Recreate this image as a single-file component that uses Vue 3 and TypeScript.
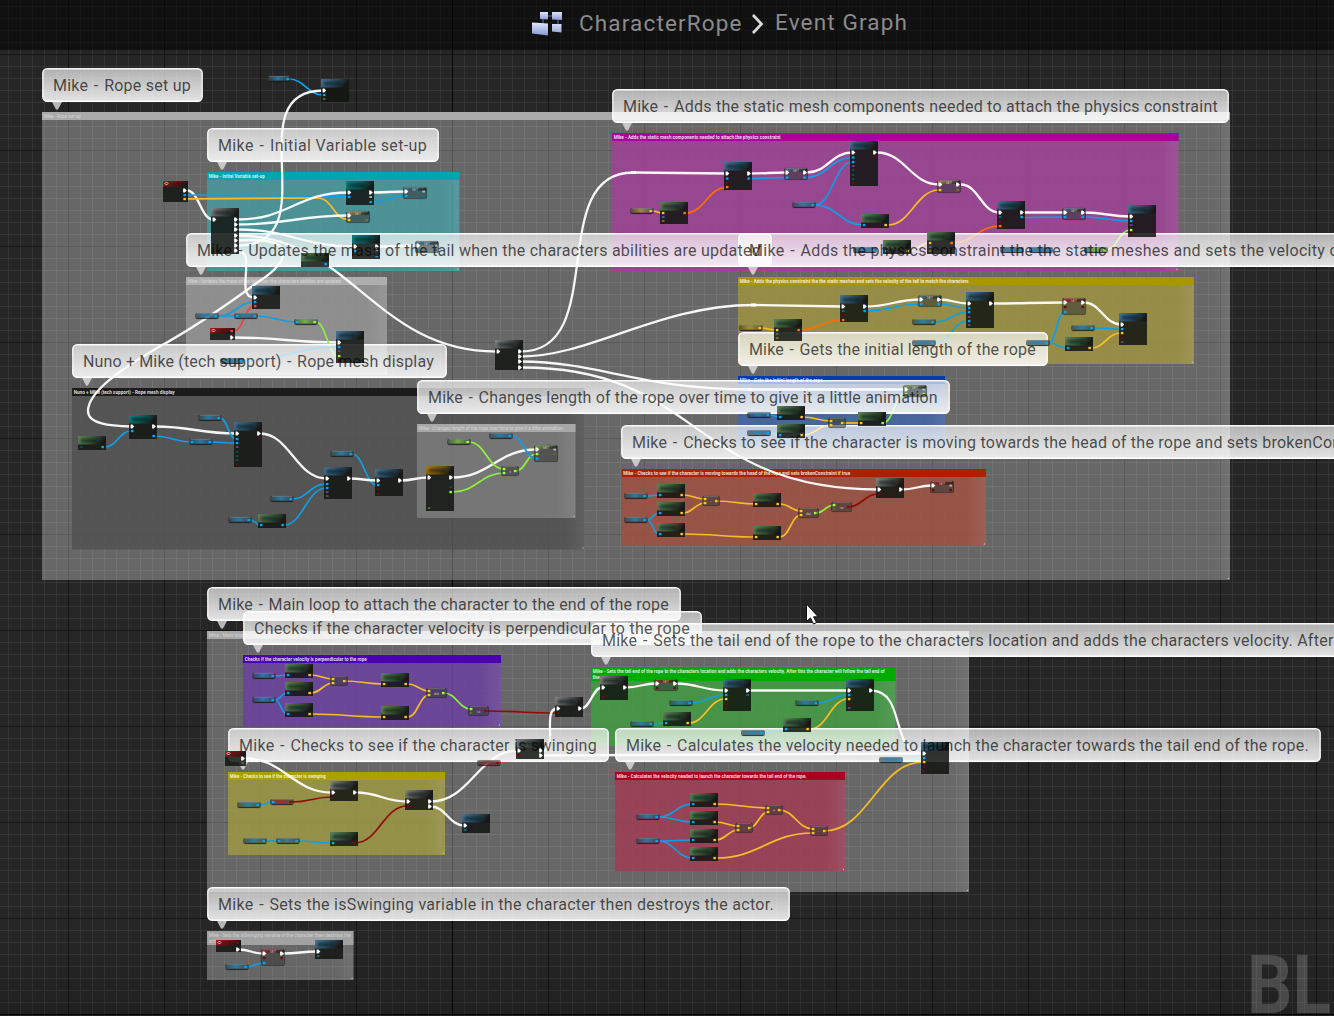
<script setup lang="ts">
type Pin = { x: number; y: number; c: string; exec: boolean; hollow: boolean }
type GraphNode = { kind: string; tone: string; x: number; y: number; w: number; h: number; pins: Pin[]; label: string }
type Comment = { x: number; y: number; r: number; b: number; head: string; body: string; title: string[]; len: number; hh: number; dim?: boolean }
type Bubble = { x: number; y: number; w: number; text: string; len?: number; gap?: string }

const pinColors: Record<string, string> = {
  e: '#ffffff', w: '#b5c5c5', b: '#00a8f6', B: '#087098', y: '#ffc61a', Y: '#8d7420', r: '#6d0b0b', R: '#ff3a3a',
  o: '#ff7300', l: '#9aff3e', g: '#4b7c24', p: '#684a87', t: '#07574f', v: '#5a6694', D: '#a00000',
}

function parsePins(list: string, x: number, y: number): Pin[] {
  return list.split(' ').filter(Boolean).map((p) => {
    const c = p.slice(-1)
    return { x, y: y + parseFloat(p), c: pinColors[c], exec: c === 'e', hollow: 'wBYgptv'.includes(c) }
  })
}

function block(tone: string, x: number, y: number, h: number, left: string, right = '', w = 28): GraphNode {
  return { kind: 'block', tone, x, y, w, h, label: '', pins: [...parsePins(left, x + 3, y), ...parsePins(right, x + w - 3.5, y)] }
}
function pill(x: number, y: number, tone = 'blue', right = 'b', left = ''): GraphNode {
  return {
    kind: 'pill', tone, x, y, w: 24, h: 6, label: '',
    pins: [...parsePins(left ? '3' + left : '', x + 3, y), ...parsePins('3' + right, x + 20.5, y)],
  }
}
function setter(tone: string, x: number, y: number, h: number, left: string, right: string): GraphNode {
  return { kind: 'set', tone, x, y, w: 24, h, label: 'SET', pins: [...parsePins(left, x + 3, y), ...parsePins(right, x + 20.5, y)] }
}
function op(x: number, y: number, label: string, left = '3y 7y', right = '5y', w = 18): GraphNode {
  return { kind: 'op', tone: 'op', x, y, w, h: 10, label, pins: [...parsePins(left, x + 3, y), ...parsePins(right, x + w - 4, y)] }
}
const pure = (x: number, y: number, l = 'b', r = 'y') => block('green', x, y, 14, '11' + l, '11' + r)
const make = (x: number, y: number) => block('green', x, y, 22, '11y 15v 19Y', '11o')

const nodes: GraphNode[] = [
  // rope set up
  pill(267, 76), block('blue', 321, 79, 23, '11.5e 16b 20g'),
  block('red', 163, 181, 21, '', '9.5e 14b 18y', 25),
  block('grey', 211, 208, 46, '11.5e', '11.5e 16.5e 21.5e 27.5e 32.5e 37.5e 42.5e'),
  block('teal', 346, 181, 24, '11.5e 16b', '11.5e 16w 21b'),
  setter('blue', 403, 187, 12, '4.5e 9b', '4.5w 9B'),
  setter('yellow', 346, 211, 12, '4.5e 9y', '9Y'),
  block('teal', 352, 235, 24, '11.5e 16b', '11.5e 16w 21b'),
  setter('blue', 415, 241, 12, '4.5e 9b', '4.5w 9B'),
  pure(301, 253, 't', 'b'),
  block('grey', 495, 340, 30, '11.5e', '11.5e 16.5e 21.5e 27.5e'),
  // static mesh components
  block('blue', 724, 162, 28, '11.5e 16.5b 21r 25o', '11.5e 16.5b'),
  pill(630, 208, 'yellow', 'y'), make(660, 202),
  setter('blue', 784, 168, 12, '4.5e 9.5b', '4.5e 9.5b'),
  block('blue', 850, 141, 45, '11.5e 16.5b 21b 25p 29t 34t 38t 42r', '11.5e 16r'),
  setter('yellow', 937, 180, 13, '4.5e 10y', '4.5e 10Y'),
  pill(792, 202), pure(861, 214), pill(853, 247), pure(883, 240), make(927, 232),
  block('blue', 997, 201, 28, '11.5e 16B 21r 25o', '11.5e 16b'),
  setter('blue', 1062, 208, 12, '4.5e 9b', '4.5e 9b'),
  block('blue', 1128, 205, 32, '11.5e 16b 20p 25l 29r'),
  pill(1000, 247), pill(1029, 247, 'blue', 'b', 'b'), pill(1084, 247, 'lime', 'l', 'b'),
  // physics constraint
  pill(739, 325, 'yellow', 'y'), make(774, 319),
  block('blue', 840, 295, 27, '11.5e 16B 20r 25o', '11.5e 16b'),
  setter('blue', 918, 295, 12, '4.5e 9b', '4.5e 9b'),
  block('blue', 966, 292, 36, '11.5e 16b 20b 25p 29b 33p', '11.5e'),
  pill(912, 319), pill(912, 340),
  setter('red', 1062, 298, 17, '4.5e 9r 14b', '4.5e 9r'),
  block('blue', 1119, 313, 32, '11.5e 16b 20y 25r 29p'),
  pill(1071, 325), pill(1026, 340), pure(1065, 337),
  // tail mass
  block('blue', 252, 286, 23, '11.5e 16b 20R'), pill(195, 313), pill(234, 313, 'blue', 'b', 'b'),
  pill(294, 319, 'lime', 'l', 'b'), block('red', 210, 328, 12, '', '3R 9.5e', 25),
  block('blue', 336, 331, 32, '11.5e 16b 20p 25l 29r'), pill(220, 358),
  // rope mesh display
  pure(78, 436, 't', 'b'), block('teal', 129, 415, 24, '11.5e 16b', '11.5e 21b'),
  pill(198, 415), pill(189, 439, 'blue', 'b', 'b'),
  block('blue', 234, 422, 45, '11.5e 17b 21b 25p 30t 34t 38t 42r', '11.5e 16r'),
  pill(330, 451), block('blue', 324, 467, 32, '11.5e 17b 21b 25p 29p', '11.5e'),
  block('blue', 375, 469, 27, '11.5e 16b 20r 25r', '11.5e'),
  pill(270, 496), pill(228, 517), pure(258, 514, 'b', 'b'),
  // rope length animation
  block('gold', 426, 466, 45, '11.5e 42g', '11.5e 21t 26l'), pill(447, 439, 'lime', 'l'), pill(489, 433),
  setter('lime', 534, 445, 17, '4.5e 9l 13.5b', '4.5w 9g'), op(501, 466, 'x', '3l 7l', '5l'),
  // initial length
  setter('lime', 903, 385, 12, '4.5e 9l', '4.5w 9l'), pill(747, 412), pill(747, 430),
  pure(777, 406), pure(777, 424), op(828, 418, '-'), pure(858, 412, 'y', 'l'),
  // broken constraint
  pill(624, 493), pill(624, 517), pure(657, 484), pure(657, 502), pure(657, 523), op(702, 496, '-'),
  pure(753, 493, 'y'), pure(753, 526, 'y'), op(798, 508, 'dot', '3y 7y', '5l', 21), op(831, 502, '<=', '3l 7g', '5D', 21),
  block('grey', 876, 478, 20, '11.5e 16r', '11.5e'), setter('red', 930, 481, 12, '4.5e 9r', '4.5w 9r'),
  // perpendicular check
  pill(252, 673), pill(252, 697), pure(285, 664), pure(285, 682), pure(285, 703), op(330, 676, '-'),
  pure(381, 673, 'y'), pure(381, 706, 'y'), op(426, 688, 'dot', '3y 7y', '5l', 21), op(468, 706, '<=', '3l 7g', '5D', 21),
  block('grey', 555, 697, 20, '11.5e 16r', '11.5e'),
  // tail end location
  block('grey', 600, 676, 24, '11.5e 21r', '11.5e'), setter('red', 654, 679, 12, '4.5e 9r', '4.5e 9r'),
  block('blue', 723, 679, 32, '11.5e 16b 20y 25r 29r', '11.5e 16B'), pill(669, 700), pill(630, 721), pure(663, 712),
  pill(741, 730), block('blue', 846, 679, 32, '11.5e 16b 20y 25r 29p', '11.5e'), pill(795, 700), pure(783, 718),
  block('blue', 921, 742, 32, '11.5e 16b 20y 25r 29r'), pill(879, 757),
  // swinging check
  block('red', 225, 751, 15, '', '7.5e 12g', 21), block('grey', 330, 781, 20, '11.5e 16r', '11.5e'),
  block('grey', 405, 790, 20, '11.5e 16r', '11.5e 16.5e'), pill(237, 802), pill(270, 799, 'red', 'D', 'b'),
  pill(243, 838), pill(276, 838, 'blue', 'b', 'b'), pure(330, 832, 'b', 'D'), block('blue', 462, 814, 19, '11.5e 16B'),
  block('grey', 516, 739, 20, '11.5e 16r', '11.5e 16.5e'), pill(477, 760, 'red', 'D'),
  // launch velocity
  pill(636, 814), pill(636, 838), pure(690, 793), pure(690, 811), pure(690, 829), pure(690, 847),
  op(735, 823, '-'), op(765, 805, '+'), op(810, 826, '-'),
  // destroy actor
  block('red', 216, 940, 12, '', '3r 9.5e', 25), setter('red', 261, 949, 17, '4.5e 9r 14b', '4.5e 9r'),
  block('blue', 315, 940, 19, '11.5e 16B'), pill(225, 964),
]

const E = '#ffffff', BL = '#0f9fe6', YE = '#f8bd24', LI = '#8df23c', OR = '#f97000', DR = '#930b08', RE = '#f04040'

/** Horizontal-tangent spline between two pins. */
function s(c: string, x1: number, y1: number, x2: number, y2: number) {
  const d = Math.max(6, Math.abs(x2 - x1) * 0.45)
  return { c, d: `M${x1},${y1} C${x1 + d},${y1} ${x2 - d},${y2} ${x2},${y2}` }
}

const wires = [
  s(BL, 289, 79, 323, 95), s(E, 187, 190.5, 213, 219.5), s(BL, 187, 195, 348, 196.5),
  { c: YE, d: 'M187,198.8 L318,198 C332,198 334,219.5 348,219.5' },
  s(E, 238, 219.5, 348, 192.5), s(E, 238, 224.5, 348, 215.5), s(E, 238, 229.5, 354, 246.5),
  s(E, 373, 192.5, 405, 191.5), s(BL, 371, 202, 405, 196), s(E, 379, 246.5, 417, 245.5), s(BL, 377, 256, 417, 250),
  s(BL, 328, 264, 354, 251),
  { c: E, d: 'M238,245.5 C330,245 235,91 323,90.5' },
  { c: E, d: 'M238,240.5 C300,236 290,262 258,282 C220,310 190,330 157,348 C120,370 88,392 88,411 C88,424 110,426 131,426.5' },
  { c: E, d: 'M237,250.5 C258,250.5 234,297.5 254,297.5' },
  { c: E, d: 'M238,235.5 C350,235.5 375,351.5 496,351.5' },
  { c: E, d: 'M521,351.5 C610,351.5 545,172.5 633,172.5 L726,173.5' },
  { c: E, d: 'M521,356.5 C590,356.5 660,305 753,305 L842,306.5' },
  { c: E, d: 'M521,361.5 C600,362 640,389 750,389.5 L905,389.5' },
  { c: E, d: 'M521,367.5 C700,367 690,489 878,489.5' },
  // static mesh components
  s(E, 750, 173.5, 786, 172.5), s(BL, 750, 178.5, 786, 177.5), s(YE, 652, 211, 663, 213), s(OR, 686, 213, 726, 187.5),
  s(E, 807, 172.5, 852, 152.5), s(BL, 806, 177.5, 852, 157.5), s(BL, 815, 205, 852, 162), s(BL, 815, 205, 863, 225),
  s(E, 877, 152.5, 939, 184.5), s(YE, 888, 225, 939, 190), s(E, 961, 184.5, 999, 212.5), s(OR, 953, 243, 999, 226),
  s(BL, 876, 250, 885, 251), s(YE, 909, 251, 929, 243), s(E, 1024, 212.5, 1064, 212.5), s(BL, 1023, 217.5, 1064, 217),
  s(E, 1085, 212.5, 1130, 216.5), s(BL, 1084, 217, 1130, 221), s(LI, 1106, 250, 1130, 230), s(BL, 1022, 250, 1031, 250),
  s(BL, 1052, 250, 1087, 250),
  // physics constraint
  s(YE, 761, 328, 776, 330), s(OR, 800, 330, 842, 320), s(E, 866, 306.5, 920, 299.5), s(BL, 865, 311, 920, 304),
  s(E, 940, 299.5, 968, 303.5), s(BL, 940, 304, 968, 308), s(BL, 935, 322, 968, 312), s(BL, 935, 343, 968, 321),
  s(E, 992, 303.5, 1064, 302.5), s(E, 1084, 302.5, 1121, 324.5), s(BL, 1094, 328, 1121, 329), s(BL, 1049, 343, 1064, 312),
  s(BL, 1049, 343, 1067, 348), s(YE, 1091, 348, 1121, 333),
  // tail mass
  s(BL, 219, 316, 254, 302), s(BL, 219, 316, 237, 316), s(BL, 256, 316, 297, 322), s(RE, 234, 331, 254, 306),
  s(E, 234, 337.5, 338, 342.5), s(LI, 316, 322, 338, 356), s(BL, 241, 361, 338, 347),
  // rope mesh display
  s(BL, 105, 447, 131, 431), s(E, 155, 426.5, 236, 433.5), s(BL, 154, 436, 192, 442), s(BL, 220, 418, 236, 439),
  s(BL, 210, 442, 236, 443), s(E, 260, 433.5, 326, 478.5), s(BL, 352, 454, 377, 485), s(E, 350, 478.5, 377, 480.5),
  s(BL, 292, 499, 326, 484), s(BL, 250, 520, 261, 525), s(BL, 284, 525, 326, 488), s(E, 401, 480.5, 428, 477.5),
  // rope length animation
  s(E, 452, 477.5, 536, 449.5), s(LI, 453, 492, 504, 473), s(LI, 469, 442, 504, 469), s(LI, 516, 471, 536, 454), s(BL, 512, 436, 536, 458.5),
  // initial length
  s(BL, 769, 415, 780, 417), s(BL, 769, 433, 780, 435), s(YE, 803, 417, 831, 421), s(YE, 803, 435, 831, 425),
  s(YE, 842, 423, 860, 423), s(LI, 883, 423, 905, 394),
  // broken constraint
  s(BL, 647, 496, 659, 495), s(BL, 647, 520, 659, 513), s(BL, 647, 520, 659, 534), s(YE, 683, 495, 705, 499),
  s(YE, 683, 513, 705, 503), s(YE, 716, 501, 756, 504), s(YE, 683, 534, 756, 537), s(YE, 780, 504, 801, 511),
  s(YE, 780, 537, 801, 515), s(LI, 816, 513, 834, 505), s(DR, 848, 507, 878, 494), s(E, 902, 489.5, 932, 485.5),
  // perpendicular check
  s(BL, 275, 676, 287, 675), s(BL, 275, 700, 287, 693), s(BL, 275, 700, 287, 714), s(YE, 311, 675, 333, 679),
  s(YE, 311, 693, 333, 683), s(YE, 344, 681, 384, 684), s(YE, 311, 714, 384, 717), s(YE, 408, 684, 429, 691),
  s(YE, 408, 717, 429, 695), s(LI, 444, 693, 471, 709), s(DR, 485, 711, 558, 713),
  // tail end location
  s(E, 581, 708.5, 602, 687.5), s(E, 626, 687.5, 656, 683.5), s(E, 676, 683.5, 725, 690.5), s(BL, 691, 703, 725, 695),
  s(YE, 689, 723, 725, 699), s(BL, 653, 724, 665, 723), s(E, 749, 690.5, 848, 690.5), s(BL, 817, 703, 848, 695),
  s(YE, 810, 729, 848, 699), s(BL, 764, 733, 785, 729),
  { c: E, d: 'M872,690.5 C906,692 890,753 923,753.5' },
  // swinging check
  s(E, 245, 758.5, 332, 792.5), s(E, 356, 792.5, 407, 801.5), s(E, 431, 801.5, 518, 750.5), s(E, 431, 806.5, 464, 825.5),
  s(BL, 259, 805, 273, 802), s(DR, 292, 802, 332, 797), s(BL, 265, 841, 279, 841), s(BL, 298, 841, 332, 843),
  s(DR, 355, 843, 407, 806), s(RE, 499, 763, 518, 755),
  { c: E, d: 'M543,750.5 C558,750 542,709 557,708.5' },
  s(E, 542, 755.5, 923, 753.5),
  // launch velocity
  s(BL, 659, 817, 692, 804), s(BL, 659, 817, 692, 822), s(BL, 659, 841, 692, 840), s(BL, 659, 841, 692, 858),
  s(YE, 716, 804, 768, 808), s(YE, 716, 822, 738, 826), s(YE, 716, 840, 738, 830), s(YE, 749, 828, 768, 812),
  s(YE, 779, 810, 813, 829), s(YE, 716, 858, 813, 833), s(YE, 824, 831, 923, 762), s(BL, 900, 760, 923, 758),
  // destroy actor
  s(E, 239, 949.5, 263, 953.5), s(E, 283, 953.5, 317, 951.5), s(BL, 247, 967, 263, 963),
]

const comments: Comment[] = [
  { x: 42, y: 112, r: 1230, b: 580, head: '#aaaaaa', body: 'rgba(255,255,255,.3)', title: ['Mike - Rope set up'], len: 37, hh: 8, dim: true },
  { x: 207, y: 631, r: 969, b: 892, head: '#a8a8a8', body: 'rgba(255,255,255,.3)', title: ['Mike - Main loop to attach the character to the end of the rope'], len: 131, hh: 8, dim: true },
  { x: 207, y: 172, r: 459.3, b: 271, head: '#00a5af', body: 'rgba(65,159,164,.75)', title: ['Mike - Initial Variable set-up'], len: 56, hh: 8 },
  { x: 612, y: 133, r: 1178.5, b: 271, head: '#aa009c', body: 'rgba(165,60,156,.75)', title: ['Mike - Adds the static mesh components needed to attach the physics constraint'], len: 167, hh: 8 },
  { x: 738, y: 277, r: 1194, b: 364, head: '#aa9600', body: 'rgba(163,152,60,.75)', title: ['Mike - Adds the physics constraint the the static meshes and sets the velocity of the tail to match the characters'], len: 229, hh: 8 },
  { x: 738, y: 376, r: 945, b: 447, head: '#003cac', body: 'rgba(60,101,172,.75)', title: ['Mike - Gets the initial length of the rope'], len: 83, hh: 8 },
  { x: 186, y: 277, r: 387, b: 375, head: '#aeaeae', body: 'rgba(155,155,155,.75)', title: ['Mike - Updates the mass of the tail when the characters abilities are updated'], len: 153, hh: 8, dim: true },
  { x: 72, y: 388, r: 584.5, b: 549.5, head: '#1b1b1b', body: 'rgba(78,78,78,.75)', title: ['Nuno + Mike (tech support) - Rope mesh display'], len: 101, hh: 8 },
  { x: 417, y: 424, r: 575.5, b: 518, head: '#a8a8a8', body: 'rgba(130,130,130,.75)', title: ['Mike - Changes length of the rope over time to give it a little animation'], len: 144, hh: 8, dim: true },
  { x: 621.5, y: 469, r: 986, b: 545.5, head: '#ac2000', body: 'rgba(165,77,60,.75)', title: ['Mike - Checks to see if the character is moving towards the head of the rope and sets brokenConstraint if true'], len: 227, hh: 8 },
  { x: 243, y: 655, r: 501, b: 726.5, head: '#4a00ae', body: 'rgba(107,60,165,.75)', title: ['Checks if the character velocity is perpendicular to the rope'], len: 122, hh: 8 },
  { x: 591, y: 667, r: 895.5, b: 746, head: '#00ab00', body: 'rgba(60,163,62,.75)', title: ['Mike - Sets the tail end of the rope to the characters location and adds the characters velocity. After this the character will follow the tail end of', 'the rope.'], len: 292, hh: 14 },
  { x: 228, y: 772, r: 445, b: 855, head: '#aaa000', body: 'rgba(163,157,60,.75)', title: ['Mike - Checks to see if the character is swinging'], len: 96, hh: 8 },
  { x: 615, y: 772, r: 845, b: 871, head: '#aa0022', body: 'rgba(165,55,82,.75)', title: ['Mike - Calculates the velocity needed to launch the character towards the tail end of the rope.'], len: 190, hh: 8 },
  { x: 207, y: 931, r: 353.5, b: 980, head: '#a2a2a2', body: 'rgba(255,255,255,.3)', title: ['Mike - Sets the isSwinging variable in the character then destroys the', 'actor.'], len: 142, hh: 14, dim: true },
]

const bubbles: Bubble[] = [
  { x: 42, y: 68, w: 161, len: 138, text: 'Mike - Rope set up' },
  { x: 207, y: 128, w: 232, len: 209, text: 'Mike - Initial Variable set-up' },
  { x: 612, y: 89, w: 617, len: 595, text: 'Mike - Adds the static mesh components needed to attach the physics constraint' },
  { x: 186, y: 233, w: 586, len: 564, text: 'Mike - Updates the mass of the tail when the characters abilities are updated' },
  { x: 738, y: 233, w: 860, gap: '0.3px', text: 'Mike - Adds the physics constraint the the static meshes and sets the velocity of the tail to match the characters' },
  { x: 72, y: 344, w: 375, len: 351, text: 'Nuno + Mike (tech support) - Rope mesh display' },
  { x: 738, y: 332, w: 310, len: 287, text: 'Mike - Gets the initial length of the rope' },
  { x: 417, y: 380, w: 533, len: 510, text: 'Mike - Changes length of the rope over time to give it a little animation' },
  { x: 621, y: 425, w: 840, gap: '0.24px', text: 'Mike - Checks to see if the character is moving towards the head of the rope and sets brokenConstraint if true' },
  { x: 207, y: 587, w: 474, len: 451, text: 'Mike - Main loop to attach the character to the end of the rope' },
  { x: 243, y: 611, w: 459, len: 436, text: 'Checks if the character velocity is perpendicular to the rope' },
  { x: 591, y: 623, w: 1180, gap: '0.25px', text: 'Mike - Sets the tail end of the rope to the characters location and adds the characters velocity. After this the character will follow the tail end of the rope.' },
  { x: 228, y: 728, w: 381, len: 358, text: 'Mike - Checks to see if the character is swinging' },
  { x: 615, y: 728, w: 706, len: 683, text: 'Mike - Calculates the velocity needed to launch the character towards the tail end of the rope.' },
  { x: 207, y: 887, w: 583, len: 556, text: 'Mike - Sets the isSwinging variable in the character then destroys the actor.' },
]

/** Cuts a caption at its spaced hyphen, which is set with extra room on both sides. */
function pieces(text: string) {
  const at = text.indexOf(' - ')
  if (at < 0) return [{ t: text, dx: 0 }]
  return [{ t: text.slice(0, at + 1), dx: 0 }, { t: '-', dx: 1.4 }, { t: text.slice(at + 2), dx: 1.4 }]
}

const tones: Record<string, [string, string]> = {
  blue: ['#4a7a9b', '#274a60'], teal: ['#078888', '#0b5a5b'], green: ['#64895f', '#385636'], grey: ['#8c8c8c', '#4b4b4b'],
  red: ['#bd1c20', '#7c0d10'], gold: ['#b08012', '#755408'], yellow: ['#c9a443', '#77622a'], lime: ['#7fbf48', '#4b7531'], op: ['#777777', '#444444'],
}
const pillTint: Record<string, string> = { blue: '#2488b8', yellow: '#c09a25', lime: '#7cc63c', red: '#a52a2a' }
</script>

<template>
  <main class="editor">
    <svg class="graph" width="1334" height="1016" viewBox="0 0 1334 1016">
      <defs>
        <pattern id="minor" x="68" y="54" width="12" height="12" patternUnits="userSpaceOnUse">
          <path d="M.5,0V12M0,.5H12" stroke="#353535" />
        </pattern>
        <pattern id="major" x="68" y="54" width="96" height="96" patternUnits="userSpaceOnUse">
          <path d="M.5,0V96M0,.5H96" stroke="#151515" />
        </pattern>
        <linearGradient id="glass" x2="0" y2="1">
          <stop offset="0" stop-color="#fff" stop-opacity=".64" />
          <stop offset="1" stop-color="#fff" stop-opacity=".87" />
        </linearGradient>
        <linearGradient id="edge" x2="0" y2="1">
          <stop offset="0" stop-color="#fff" stop-opacity=".95" />
          <stop offset=".5" stop-color="#fff" stop-opacity=".8" />
          <stop offset="1" stop-color="#fff" />
        </linearGradient>
        <linearGradient id="rim">
          <stop offset="0" stop-color="#fff" stop-opacity="0" />
          <stop offset="1" stop-color="#fff" stop-opacity=".07" />
        </linearGradient>
        <linearGradient v-for="(t, k) in tones" :id="'tone-' + k" :key="k" x2="1" y2=".25">
          <stop offset="0" :stop-color="t[0]" />
          <stop offset=".6" :stop-color="t[1]" />
          <stop offset="1" stop-color="#161816" />
        </linearGradient>
        <linearGradient v-for="(t, k) in pillTint" :id="'pill-' + k" :key="k">
          <stop offset="0" :stop-color="t" stop-opacity=".15" />
          <stop offset=".45" :stop-color="t" />
          <stop offset="1" :stop-color="t" stop-opacity=".1" />
        </linearGradient>
        <linearGradient id="vignette" x2="0" y2="1">
          <stop offset="0" stop-color="#000" stop-opacity="0" />
          <stop offset="1" stop-color="#000" stop-opacity=".16" />
        </linearGradient>
        <filter id="smudge" x="-20%" y="-60%" width="140%" height="220%"><feGaussianBlur stdDeviation="1" /></filter>
      </defs>

      <rect width="1334" height="1016" fill="#262626" />
      <rect width="1334" height="1016" fill="url(#minor)" />
      <rect width="1334" height="1016" fill="url(#major)" />
      <path d="M452.5,0V1016M0,1014.5H1334" stroke="#060606" />
      <rect y="936" width="1334" height="80" fill="url(#vignette)" />

      <g v-for="(c, i) in comments" :key="'c' + i">
        <rect :x="c.x" :y="c.y" :width="c.r - c.x" :height="c.b - c.y" :fill="c.body" />
        <rect :x="c.r - 20" :y="c.y + c.hh" width="20" :height="c.b - c.y - c.hh" fill="url(#rim)" />
        <rect :x="c.x" :y="c.y" :width="c.r - c.x" :height="c.hh" :fill="c.head" />
        <text
          v-for="(line, n) in c.title" :key="n" class="comment-title" :class="{ dim: c.dim }"
          :x="c.x + 1.7" :y="c.y + 6.1 + n * 6" :textLength="n ? undefined : c.len" lengthAdjust="spacingAndGlyphs"
        >{{ line }}</text>
        <path :d="`M${c.r - 1},${c.b - 2.5}v1.5h-1.5z`" fill="#d0d0d0" />
      </g>

      <path
        v-for="(w, i) in wires" :key="'w' + i" :d="w.d" fill="none" :stroke="w.c"
        :stroke-width="w.c === '#ffffff' ? 2.3 : 1.7" :stroke-opacity="w.c === '#ffffff' ? 0.94 : 1"
      />
      <path d="M631,172.5h5M751,305h5M748,389.5h4" stroke="#fff" stroke-width="3" />

      <g v-for="(b, i) in bubbles" :key="'b' + i">
        <path :d="`M${b.x + 10},${b.y + 34}h10l-4,7.5h-2z`" fill="#e8e8e8" fill-opacity=".75" />
        <rect :x="b.x + 0.75" :y="b.y + 0.75" :width="b.w - 1.5" height="32.5" rx="4.5" fill="url(#glass)" stroke="url(#edge)" stroke-width="1.4" />
      </g>

      <g v-for="(n, i) in nodes" :key="'n' + i">
        <template v-if="n.kind === 'block'">
          <rect :x="n.x" :y="n.y" :width="n.w" :height="n.h" fill="#121512" fill-opacity=".86" />
          <rect :x="n.x" :y="n.y" :width="n.w" :height="n.w < 28 ? 5.5 : 8.5" :fill="`url(#tone-${n.tone})`" fill-opacity=".92" />
          <rect :x="n.x + 3" :y="n.y + (n.w < 28 ? 2 : 3)" :width="n.w - 12" :height="n.w < 28 ? 2 : 3" fill="#0b1114" fill-opacity=".55" filter="url(#smudge)" />
          <path v-if="n.tone === 'red'" :d="`M${n.x + 3.5},${n.y + 1}l1.5,1.5l-1.5,1.5l-1.5,-1.5z`" fill="none" stroke="#fff" stroke-width=".7" />
        </template>
        <template v-else-if="n.kind === 'pill'">
          <rect :x="n.x" :y="n.y" :width="n.w" :height="n.h" rx="2" fill="#2a2f33" fill-opacity=".62" />
          <rect :x="n.x + 1" :y="n.y + 0.4" :width="n.w - 2" height="4" rx="1.6" :fill="`url(#pill-${n.tone})`" fill-opacity=".8" />
          <path :d="`M${n.x + 2},${n.y + 0.4}h${n.w - 4}`" stroke="#9aa9b0" stroke-width=".6" stroke-opacity=".7" />
          <path :d="`M${n.x + 1.5},${n.y + 5.6}h${n.w - 3}`" stroke="#151515" stroke-width=".9" stroke-opacity=".7" />
        </template>
        <template v-else>
          <rect :x="n.x + 0.4" :y="n.y + 0.4" :width="n.w - 0.8" :height="n.h - 0.8" rx="1.6" fill="#383838" fill-opacity=".58" stroke="#1a1a1a" stroke-opacity=".55" stroke-width=".8" />
          <rect v-if="n.kind === 'set'" :x="n.x + 1" :y="n.y + 0.4" :width="n.w - 2" height="3.4" :fill="`url(#tone-${n.tone})`" fill-opacity=".65" />
          <path :d="`M${n.x + 2},${n.y + 0.6}h${n.w - 4}`" stroke="#aaaaaa" stroke-width=".6" stroke-opacity=".7" />
          <text class="node-label" :x="n.x + n.w / 2" :y="n.kind === 'set' ? n.y + 3.6 : n.y + 6.5">{{ n.label }}</text>
        </template>
        <template v-for="(p, j) in n.pins" :key="j">
          <path v-if="p.exec" :d="`M${p.x - 1.4},${p.y - 1.9}h1.7l2,1.9l-2,1.9h-1.7z`" :fill="p.c" />
          <rect v-else-if="p.hollow" :x="p.x - 1.2" :y="p.y - 0.9" width="2.7" height="1.9" :fill="p.c" fill-opacity=".9" />
          <rect v-else :x="p.x - 1.1" :y="p.y - 1.1" width="2.5" height="2.3" :fill="p.c" />
        </template>
      </g>

      <text
        v-for="(b, i) in bubbles" :key="'t' + i" class="bubble-text"
        :x="b.x + 11" :y="b.y + 23" :textLength="b.len" :letter-spacing="b.gap ?? '0.3px'"
      ><tspan v-for="(p, j) in pieces(b.text)" :key="j" :dx="p.dx">{{ p.t }}</tspan></text>

      <text class="watermark" x="1247" y="1013" textLength="84" lengthAdjust="spacingAndGlyphs">BL</text>
      <path d="M806.5,604V621.5l4,-3.6l3,6.1l3,-1.4l-2.9,-5.8h4.5z" fill="#fff" stroke="#111" stroke-width="1" />
    </svg>

    <header class="titlebar">
      <svg class="graph-icon" width="32" height="26" viewBox="0 0 32 26">
        <defs>
          <linearGradient id="tile" x2="0" y2="1">
            <stop offset="0" stop-color="#dfe5fb" />
            <stop offset="1" stop-color="#8797d2" />
          </linearGradient>
        </defs>
        <path d="M15,5H21M26,8V15M11,8V14" stroke="#697095" stroke-width="1" />
        <path d="M8,1H16V8.5L8,8zM20,1H30V9L20,8.5z" fill="url(#tile)" />
        <path d="M0,11.5L16,12.5V24.5L0,22.5zM20,13H29.5V21.500L20,20.5z" fill="url(#tile)" />
      </svg>
      <span class="crumb asset">CharacterRope</span>
      <svg class="chevron" width="13" height="20" viewBox="0 0 13 20">
        <path d="M2,1L10.5,10L2,19" fill="none" stroke="#d8d8d8" stroke-width="2.8" />
      </svg>
      <span class="crumb page">Event Graph</span>
    </header>
  </main>
</template>

<style>
body {
  background: #262626;
  overflow: hidden;
}
</style>

<style scoped>
.editor {
  position: relative;
  width: 1334px;
  height: 1016px;
  overflow: hidden;
  font-family: Roboto, 'Liberation Sans', sans-serif;
}
.graph {
  display: block;
}
.titlebar {
  position: absolute;
  inset: 0 0 auto 0;
  height: 50px;
  box-sizing: border-box;
  padding-left: 532px;
  display: flex;
  align-items: flex-start;
  background: rgba(0, 0, 0, 0.56);
}
.graph-icon {
  margin-top: 11px;
}
.crumb {
  font-size: 22.5px;
  line-height: 26px;
  letter-spacing: 1.15px;
  color: #8b8b8b;
  white-space: nowrap;
}
.asset {
  margin: 10px 0 0 15px;
  width: 172px;
}
.chevron {
  margin-top: 14px;
}
.page {
  margin: 9px 0 0 11px;
}
.bubble-text {
  font-size: 16px;
  fill: #000000;
  fill-opacity: 0.68;
  white-space: pre;
}
.comment-title {
  font-size: 4.8px;
  font-weight: 700;
  fill: #ffffff;
  fill-opacity: 0.85;
}
.comment-title.dim {
  font-weight: 400;
  fill-opacity: 0.5;
}
.node-label {
  font-size: 3.4px;
  fill: #ffffff;
  fill-opacity: 0.7;
  text-anchor: middle;
}
.watermark {
  font-size: 81px;
  font-weight: 700;
  fill: #ffffff;
  fill-opacity: 0.18;
}
</style>
